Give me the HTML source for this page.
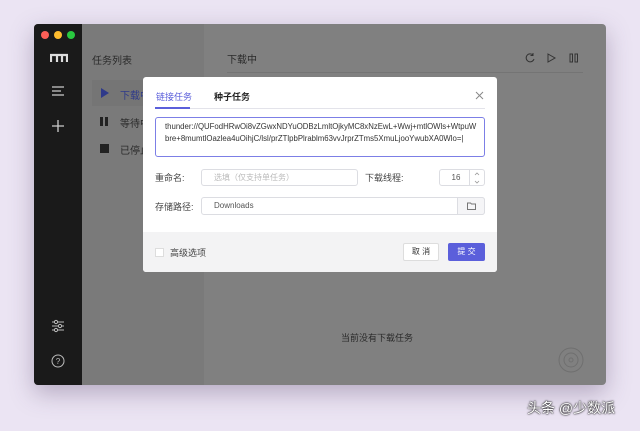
<!DOCTYPE html>
<html><head><meta charset="utf-8"><style>
*{margin:0;padding:0;box-sizing:border-box}
body{width:640px;height:431px;background:#ebe4f3;font-family:"Liberation Sans","Noto Sans CJK SC",sans-serif;position:relative;overflow:hidden}
.win{position:absolute;left:34px;top:24px;width:572px;height:361px;background:#808080;border-radius:4px;overflow:hidden;box-shadow:0 8px 24px rgba(80,60,100,.35)}
.side{position:absolute;left:0;top:0;width:48px;height:100%;background:#1a1a1a}
.dot{position:absolute;top:7px;width:8px;height:8px;border-radius:50%}
.list{position:absolute;left:48px;top:0;width:122px;height:100%;background:#7a7a7a}
.t{position:absolute;font-size:10px;color:#2a2a2a;white-space:nowrap}
.dlg{position:absolute;left:143px;top:77px;width:354px;height:195px;background:#fff;border-radius:3px;overflow:hidden}
.foot{position:absolute;left:0;top:155px;width:100%;height:40px;background:#f3f3f4}
.inp{position:absolute;border:1px solid #dcdde2;border-radius:3px;background:#fff;font-size:8px;color:#555;padding-left:12px}
.lbl{position:absolute;font-size:9px;color:#444}
</style></head><body>
<div class="win">
 <div class="side">
  <div class="dot" style="left:7px;background:#fc5f57"></div>
  <div class="dot" style="left:20px;background:#fdbc2e"></div>
  <div class="dot" style="left:33px;background:#29c840"></div>
  <svg style="position:absolute;left:16px;top:29px" width="18" height="10"><path d="M1 9V2H17V9M7 2V9M12 2V9" stroke="#ddd" stroke-width="2.2" fill="none"/></svg>
  <svg style="position:absolute;left:17px;top:61px" width="14" height="12"><path d="M1 2H13M1 6H10M1 10H13" stroke="#ccc" stroke-width="1.2"/></svg>
  <svg style="position:absolute;left:17px;top:95px" width="14" height="14"><path d="M7 1V13M1 7H13" stroke="#ccc" stroke-width="1.3"/></svg>
  <svg style="position:absolute;left:17px;top:295px" width="14" height="14"><path d="M1 3H13M1 7H13M1 11H13" stroke="#bbb" stroke-width="1"/><circle cx="5" cy="3" r="1.6" fill="#1a1a1a" stroke="#bbb"/><circle cx="9" cy="7" r="1.6" fill="#1a1a1a" stroke="#bbb"/><circle cx="5" cy="11" r="1.6" fill="#1a1a1a" stroke="#bbb"/></svg>
  <svg style="position:absolute;left:17px;top:330px" width="14" height="14"><circle cx="7" cy="7" r="6" stroke="#bbb" fill="none"/><text x="7" y="10" font-size="8" text-anchor="middle" fill="#bbb" font-family="Liberation Sans">?</text></svg>
 </div>
 <div class="list">
  <div class="t" style="left:10px;top:28px;font-size:10px">任务列表</div>
  <div style="position:absolute;left:10px;top:56px;width:112px;height:26px;background:#757575"></div>
  <svg style="position:absolute;left:18px;top:64px" width="10" height="10"><path d="M1 0L9 5L1 10Z" fill="#2f3a8a"/></svg>
  <div class="t" style="left:38px;top:63px;color:#2f3a8a">下载中</div>
  <div style="position:absolute;left:18px;top:93px;width:3px;height:9px;background:#222"></div>
  <div style="position:absolute;left:23px;top:93px;width:3px;height:9px;background:#222"></div>
  <div class="t" style="left:38px;top:91px">等待中</div>
  <div style="position:absolute;left:18px;top:120px;width:9px;height:9px;background:#222"></div>
  <div class="t" style="left:38px;top:118px">已停止</div>
 </div>
 <div class="t" style="left:193px;top:27px">下载中</div>
 <div style="position:absolute;left:193px;top:48px;width:356px;height:1px;background:#747474"></div>
 <svg style="position:absolute;left:490px;top:28px" width="60" height="12"><path d="M9 3A4 4 0 1 0 10 7M9 1V3.5H6.5" stroke="#333" fill="none"/><path d="M24 2L31 6L24 10Z" stroke="#333" fill="none"/><rect x="46" y="2" width="2.5" height="8" stroke="#333" fill="none"/><rect x="51" y="2" width="2.5" height="8" stroke="#333" fill="none"/></svg>
 <div class="t" style="left:307px;top:307px;font-size:9px">当前没有下载任务</div>
 <svg style="position:absolute;left:524px;top:322px" width="26" height="28"><circle cx="13" cy="14" r="12" stroke="#6f6f6f" fill="none"/><circle cx="13" cy="14" r="7" stroke="#6f6f6f" fill="none"/><circle cx="13" cy="14" r="2" stroke="#6f6f6f" fill="none"/></svg>
</div>
<div class="dlg">
 <div style="position:absolute;left:13px;top:13px;font-size:9px;color:#5b5fdb">链接任务</div>
 <div style="position:absolute;left:71px;top:13px;font-size:9px;color:#222;font-weight:bold">种子任务</div>
 <div style="position:absolute;left:12px;top:31px;width:330px;height:1px;background:#e3e3ea"></div>
 <div style="position:absolute;left:12px;top:30px;width:35px;height:2px;background:#5b5fdb"></div>
 <svg style="position:absolute;left:332px;top:14px" width="9" height="9"><path d="M1 1L8 8M8 1L1 8" stroke="#888"/></svg>
 <div style="position:absolute;left:12px;top:40px;width:330px;height:40px;border:1px solid #7c7fe6;border-radius:3px;padding:3px 9px;font-size:7.8px;line-height:12px;color:#333;white-space:nowrap;overflow:hidden">thunder://QUFodHRwOi8vZGwxNDYuODBzLmltOjkyMC8xNzEwL+Wwj+mtlOWls+WtpuW<br>bre+8mumtlOazlea4uOihjC/lsl/prZTlpbPlrablm63vvJrprZTms5XmuLjooYwubXA0Wlo=|</div>
 <div class="lbl" style="left:12px;top:94px">重命名:</div>
 <div class="inp" style="left:58px;top:92px;width:157px;height:17px;line-height:15px;color:#bbb">选填（仅支持单任务）</div>
 <div class="lbl" style="left:222px;top:94px">下载线程:</div>
 <div class="inp" style="left:296px;top:92px;width:46px;height:17px;line-height:15px;text-align:center;padding:0;padding-right:12px">16</div>
 <div style="position:absolute;left:326px;top:92px;width:1px;height:17px;background:#dcdde2"></div>
 <svg style="position:absolute;left:330px;top:94px" width="8" height="14"><path d="M2 4L4 2L6 4M2 10L4 12L6 10" stroke="#999" fill="none" stroke-width=".8"/></svg>
 <div class="lbl" style="left:12px;top:123px">存储路径:</div>
 <div class="inp" style="left:58px;top:120px;width:284px;height:18px;line-height:16px">Downloads</div>
 <div style="position:absolute;left:314px;top:120px;width:28px;height:18px;border:1px solid #dcdde2;background:#f5f5f7;border-radius:0 3px 3px 0"></div>
 <svg style="position:absolute;left:324px;top:125px" width="9" height="8"><path d="M0.5 1H3.5L4.5 2H8.5V7.5H0.5Z" stroke="#777" fill="none"/></svg>
 <div class="foot">
  <div style="position:absolute;left:12px;top:16px;width:9px;height:9px;border:1px solid #ddd;background:#fff"></div>
  <div class="lbl" style="left:27px;top:14px">高级选项</div>
  <div style="position:absolute;left:260px;top:11px;width:36px;height:18px;border:1px solid #ddd;background:#fff;border-radius:2px;font-size:8px;color:#333;text-align:center;line-height:16px">取 消</div>
  <div style="position:absolute;left:305px;top:11px;width:37px;height:18px;background:#5b5fdb;border-radius:2px;font-size:8px;color:#fff;text-align:center;line-height:18px">提 交</div>
 </div>
</div>
<div style="position:absolute;left:527px;top:398px;font-size:14px;color:#fff;text-shadow:0 0 2px #000,0 0 1px #000">头条 @少数派</div>
</body></html>
